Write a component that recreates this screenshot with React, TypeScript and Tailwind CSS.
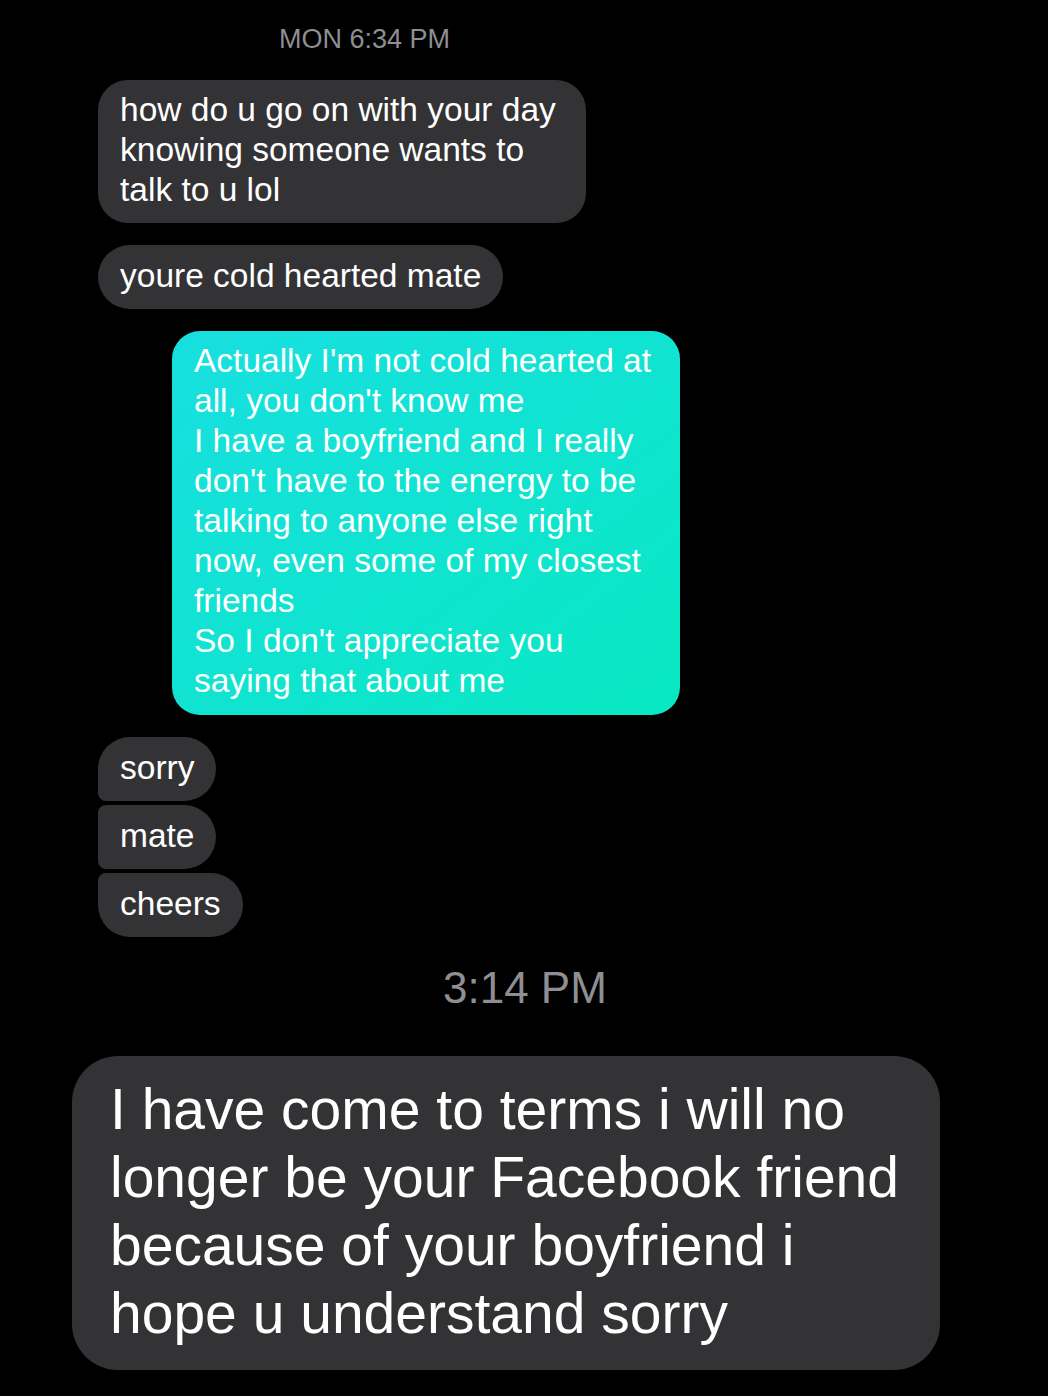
import React from "react";

const font = { fontFamily: '"Liberation Sans", Arial, sans-serif' };

export default function App() {
  return (
    <div className="w-[1048px] h-[1396px] bg-black overflow-hidden text-white" style={font}>
      <div className="flex flex-col">
        <div className="pt-[24px] pl-[279px] text-[27px] leading-[30px] text-[#8e8e93]">MON 6:34 PM</div>

        <div className="mt-[26px] ml-[98px] w-[488px] rounded-[30px] bg-[#333335] pl-[22px] pr-[20px] pt-[10px] pb-[13px] text-[33.5px] leading-[40px]">
          how do u go on with your day<br />knowing someone wants to<br />talk to u lol
        </div>

        <div className="mt-[22px] ml-[98px] self-start rounded-[32px] bg-[#333335] pl-[22px] pr-[22px] pt-[11px] pb-[13px] text-[33.5px] leading-[40px]">
          youre cold hearted mate
        </div>

        <div className="mt-[22px] ml-[172px] w-[508px] rounded-[28px] bg-gradient-to-br from-[#18dfe0] to-[#08e8c2] pl-[22px] pr-[16px] pt-[10px] pb-[14px] text-[33.5px] leading-[40px] whitespace-nowrap">
          Actually I'm not cold hearted at<br />all, you don't know me<br />I have a boyfriend and I really<br />don't have to the energy to be<br />talking to anyone else right<br />now, even some of my closest<br />friends<br />So I don't appreciate you<br />saying that about me
        </div>

        <div className="mt-[22px] ml-[98px] flex flex-col items-start gap-[4px]">
          <div className="rounded-tl-[32px] rounded-bl-[8px] rounded-r-[32px] bg-[#333335] pl-[22px] pr-[22px] pt-[11px] pb-[13px] text-[33.5px] leading-[40px]">sorry</div>
          <div className="rounded-l-[8px] rounded-r-[32px] bg-[#333335] pl-[22px] pr-[22px] pt-[11px] pb-[13px] text-[33.5px] leading-[40px]">mate</div>
          <div className="rounded-tl-[8px] rounded-bl-[32px] rounded-r-[32px] bg-[#333335] pl-[22px] pr-[22px] pt-[11px] pb-[13px] text-[33.5px] leading-[40px]">cheers</div>
        </div>

        <div className="mt-[26px] pl-[443px] text-[44px] leading-[50px] text-[#8e8e93]">3:14 PM</div>

        <div className="mt-[43px] ml-[72px] w-[868px] h-[314px] rounded-[46px] bg-[#333335] pl-[38px] pt-[19px] text-[57px] leading-[68px] whitespace-nowrap">
          I have come to terms i will no<br />longer be your Facebook friend<br />because of your boyfriend i<br />hope u understand sorry
        </div>
      </div>
    </div>
  );
}
